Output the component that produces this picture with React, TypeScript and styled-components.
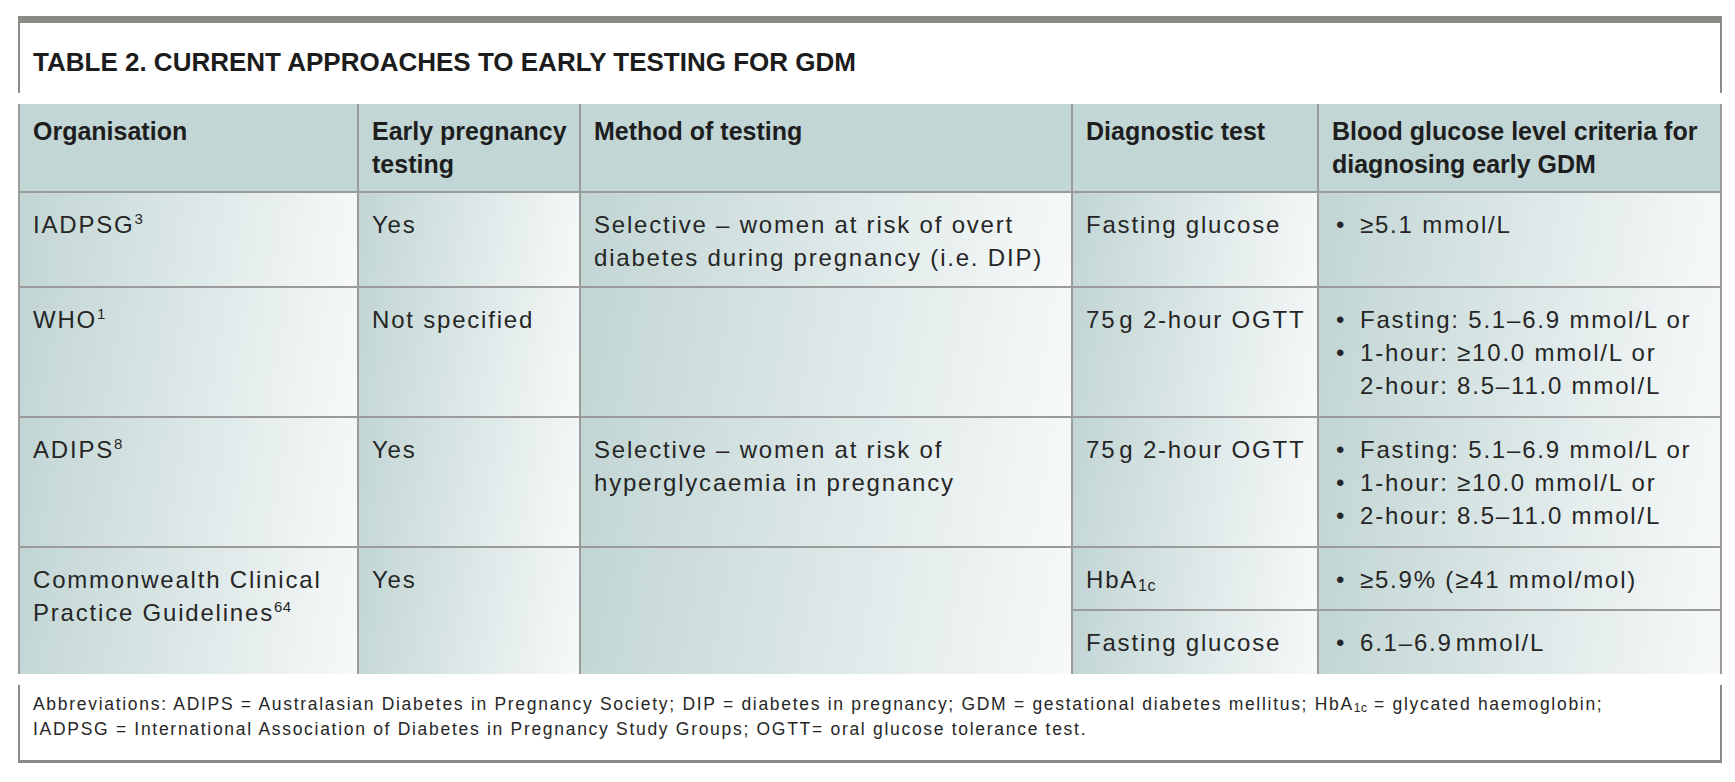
import React from "react";
import styled, { createGlobalStyle } from "styled-components";

const GlobalStyle = createGlobalStyle`
  html, body {
    margin: 0;
    padding: 0;
    background: #ffffff;
  }
  body {
    font-family: "Liberation Sans", Arial, sans-serif;
    color: #262626;
  }
`;

const Page = styled.div`
  width: 1704px;
  padding: 16px 0 0 18px;
`;

const TitleBox = styled.div`
  height: 70px;
  border-top: 7px solid #8b8b86;
  border-left: 2px solid #8b8b86;
  border-right: 2px solid #8b8b86;
  padding: 0 13px;
`;

const Title = styled.h2`
  margin: 0;
  padding-top: 24px;
  font-size: 26px;
  line-height: 30px;
  font-weight: 700;
  color: #1c1c1c;
`;

const Grid = styled.div`
  margin-top: 11px;
  display: grid;
  grid-template-columns: 339px 222px 492px 246px 401px;
  grid-template-rows: 89px 95px 130px 130px 63px 63px;
  border-left: 2px solid #9b9c9a;
  border-right: 2px solid #9b9c9a;
`;

const BaseCell = styled.div<{ $last?: boolean; $noBottom?: boolean; $span?: number }>`
  box-sizing: border-box;
  border-right: ${(p) => (p.$last ? "none" : "2px solid #9b9c9a")};
  border-bottom: ${(p) => (p.$noBottom ? "none" : "2px solid #9b9c9a")};
  grid-row: ${(p) => (p.$span ? `span ${p.$span}` : "auto")};
  padding: 15px 13px 0;
  white-space: nowrap;
`;

const HeadCell = styled(BaseCell)`
  background: #c2d6d5;
  padding-top: 11px;
  font-size: 25px;
  line-height: 33px;
  font-weight: 700;
  color: #1e1e1e;
`;

const Cell = styled(BaseCell)`
  background: linear-gradient(100deg, #c1d5d4 0%, #dfe9e9 55%, #f7f9f9 100%);
  font-size: 24px;
  line-height: 33px;
  letter-spacing: 1.8px;
  color: #262626;
`;

const Sup = styled.sup`
  font-size: 15px;
  line-height: 0;
  vertical-align: 9px;
  letter-spacing: 0.5px;
`;

const Sub = styled.sub`
  font-size: 16px;
  line-height: 0;
  vertical-align: -3px;
  letter-spacing: 0.5px;
`;

const BulletItem = styled.div`
  display: flex;
  margin-left: 4px;
`;

const Bullet = styled.span`
  width: 24px;
  flex-shrink: 0;
  letter-spacing: 0;
`;

const Unit = styled.span`
  margin-left: 3px;
`;

const Footer = styled.div`
  margin-top: 11px;
  border-left: 2px solid #8b8b86;
  border-right: 2px solid #8b8b86;
  border-bottom: 3px solid #8b8b86;
  padding: 7px 13px 18px;
  font-size: 17.5px;
  line-height: 25px;
  letter-spacing: 1.7px;
  color: #262626;
  white-space: nowrap;
`;

const FootSub = styled.sub`
  font-size: 12px;
  line-height: 0;
  vertical-align: -2px;
  letter-spacing: 0.5px;
`;

const Item: React.FC<{ children: React.ReactNode }> = ({ children }) => (
  <BulletItem>
    <Bullet>•</Bullet>
    <span>{children}</span>
  </BulletItem>
);

export default function App() {
  return (
    <>
      <GlobalStyle />
      <Page>
        <TitleBox>
          <Title>TABLE 2. CURRENT APPROACHES TO EARLY TESTING FOR GDM</Title>
        </TitleBox>
        <Grid>
          <HeadCell>Organisation</HeadCell>
          <HeadCell>
            Early pregnancy
            <br />
            testing
          </HeadCell>
          <HeadCell>Method of testing</HeadCell>
          <HeadCell>Diagnostic test</HeadCell>
          <HeadCell $last>
            Blood glucose level criteria for
            <br />
            diagnosing early GDM
          </HeadCell>

          <Cell>
            IADPSG<Sup>3</Sup>
          </Cell>
          <Cell>Yes</Cell>
          <Cell>
            Selective – women at risk of overt
            <br />
            diabetes during pregnancy (i.e. DIP)
          </Cell>
          <Cell>Fasting glucose</Cell>
          <Cell $last>
            <Item>≥5.1 mmol/L</Item>
          </Cell>

          <Cell>
            WHO<Sup>1</Sup>
          </Cell>
          <Cell>Not specified</Cell>
          <Cell />
          <Cell>
            75<Unit>g</Unit> 2-hour OGTT
          </Cell>
          <Cell $last>
            <Item>Fasting: 5.1–6.9 mmol/L or</Item>
            <Item>
              1-hour: ≥10.0 mmol/L or
              <br />
              2-hour: 8.5–11.0 mmol/L
            </Item>
          </Cell>

          <Cell>
            ADIPS<Sup>8</Sup>
          </Cell>
          <Cell>Yes</Cell>
          <Cell>
            Selective – women at risk of
            <br />
            hyperglycaemia in pregnancy
          </Cell>
          <Cell>
            75<Unit>g</Unit> 2-hour OGTT
          </Cell>
          <Cell $last>
            <Item>Fasting: 5.1–6.9 mmol/L or</Item>
            <Item>1-hour: ≥10.0 mmol/L or</Item>
            <Item>2-hour: 8.5–11.0 mmol/L</Item>
          </Cell>

          <Cell $span={2} $noBottom>
            Commonwealth Clinical
            <br />
            Practice Guidelines<Sup>64</Sup>
          </Cell>
          <Cell $span={2} $noBottom>
            Yes
          </Cell>
          <Cell $span={2} $noBottom />
          <Cell>
            HbA<Sub>1c</Sub>
          </Cell>
          <Cell $last>
            <Item>≥5.9% (≥41 mmol/mol)</Item>
          </Cell>
          <Cell $noBottom>Fasting glucose</Cell>
          <Cell $last $noBottom>
            <Item>
              6.1–6.9<Unit>mmol/L</Unit>
            </Item>
          </Cell>
        </Grid>
        <Footer>
          Abbreviations: ADIPS = Australasian Diabetes in Pregnancy Society; DIP = diabetes in pregnancy; GDM =
          gestational diabetes mellitus; HbA<FootSub>1c</FootSub> = glycated haemoglobin;
          <br />
          IADPSG = International Association of Diabetes in Pregnancy Study Groups; OGTT= oral glucose tolerance test.
        </Footer>
      </Page>
    </>
  );
}
